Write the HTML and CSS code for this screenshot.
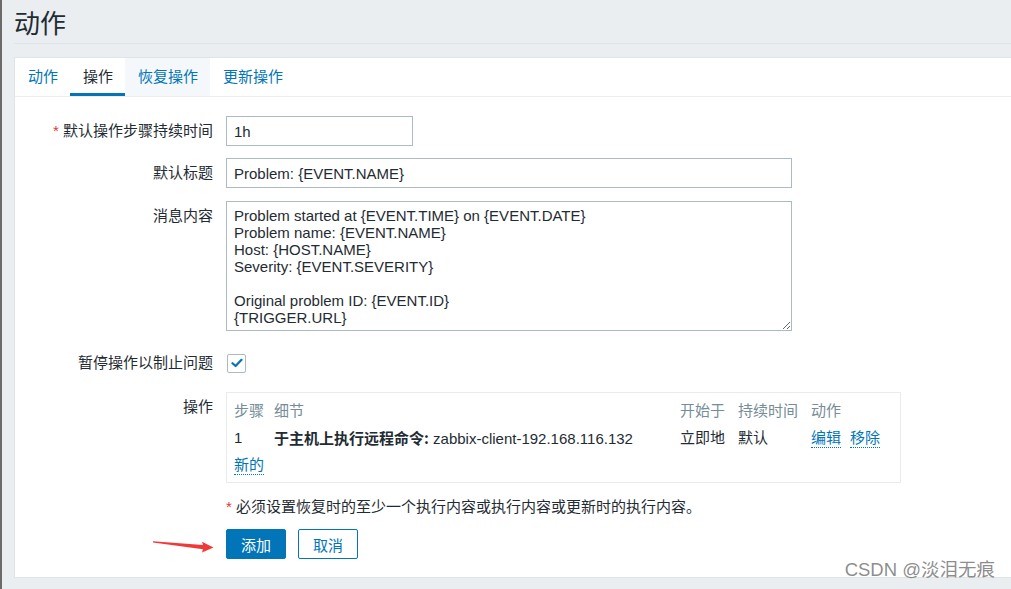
FILE: index.html
```html
<!DOCTYPE html>
<html lang="zh-CN">
<head>
<meta charset="utf-8">
<title>动作</title>
<link rel="stylesheet" href="styles.css">
</head>
<body>
<div class="page">
  <header class="page-header"><h1 class="page-title">动作</h1></header>
  <section class="panel">
    <nav class="tabs">
      <a class="tab">动作</a>
      <a class="tab tab-active">操作</a>
      <a class="tab tab-hover">恢复操作</a>
      <a class="tab">更新操作</a>
    </nav>
    <form class="form">
      <div class="row row-1">
        <label class="label"><span class="req">*</span> 默认操作步骤持续时间</label>
        <div class="field"><input class="input input-short" value="1h"></div>
      </div>
      <div class="row row-2">
        <label class="label">默认标题</label>
        <div class="field"><input class="input input-long" value="Problem: {EVENT.NAME}"></div>
      </div>
      <div class="row row-3">
        <label class="label">消息内容</label>
        <div class="field"><textarea class="textarea">Problem started at {EVENT.TIME} on {EVENT.DATE}
Problem name: {EVENT.NAME}
Host: {HOST.NAME}
Severity: {EVENT.SEVERITY}

Original problem ID: {EVENT.ID}
{TRIGGER.URL}</textarea></div>
      </div>
      <div class="row row-4">
        <label class="label">暂停操作以制止问题</label>
        <div class="field field-check">
          <span class="checkbox"><svg width="12" height="10" viewBox="0 0 12 10"><path d="M1.5 5.2 L4.6 8 L10.5 1.8" fill="none" stroke="#0275b8" stroke-width="2.2" stroke-linecap="round" stroke-linejoin="round"/></svg></span>
        </div>
      </div>
      <div class="row row-5">
        <label class="label">操作</label>
        <div class="field">
          <div class="ops">
            <div class="ops-row ops-head">
              <span>步骤</span><span>细节</span><span>开始于</span><span>持续时间</span><span>动作</span>
            </div>
            <div class="ops-row">
              <span>1</span>
              <span><b class="strong">于主机上执行远程命令:</b> zabbix-client-192.168.116.132</span>
              <span>立即地</span>
              <span>默认</span>
              <span class="ops-actions"><a class="link">编辑</a><a class="link">移除</a></span>
            </div>
            <div class="ops-row ops-new"><a class="link">新的</a></div>
          </div>
        </div>
      </div>
      <div class="row row-note">
        <div class="label"></div>
        <div class="field note"><span class="req">*</span> 必须设置恢复时的至少一个执行内容或执行内容或更新时的执行内容。</div>
      </div>
      <div class="row row-buttons">
        <div class="label"></div>
        <div class="field buttons">
          <button type="button" class="btn btn-primary">添加</button>
          <button type="button" class="btn btn-alt">取消</button>
        </div>
      </div>
    </form>
  </section>
  <svg class="arrow" width="70" height="20" viewBox="150 538 70 20"><polygon points="153,541.3 203,545 202,541.8 213.5,547.6 202,552.4 203,549.2 153,542.6" fill="#f03a3a"/></svg>
  <div class="watermark">CSDN @淡泪无痕</div>
</div>
</body>
</html>
```
FILE: styles.css
```css
html, body {
  margin: 0;
  padding: 0;
  height: 100%;
  overflow: hidden;
}
body {
  background: #ebeef0;
  font-family: "Liberation Sans", "Noto Sans CJK SC", sans-serif;
  font-size: 15px;
  color: #1f2c33;
}
.page {
  position: relative;
  height: 589px;
  border-left: 2px solid #6b6b6b;
  padding-left: 12px;
  box-sizing: border-box;
}
.page-header {
  height: 43px;
  border-bottom: 1px solid #dde3e6;
  margin-right: -20px;
}
.page-title {
  margin: 0;
  font-weight: normal;
  font-size: 26px;
  line-height: 43px;
  color: #1f2c33;
  font-family: "Noto Sans CJK SC", sans-serif;
}
.panel {
  margin-top: 13px;
  background: #fff;
  border: 1px solid #dfe4e7;
  border-right: none;
  height: 521px;
  box-sizing: border-box;
  margin-right: -20px;
}
.tabs {
  display: flex;
  height: 38px;
  border-bottom: 1px solid #ebeef0;
}
.tab {
  display: block;
  padding: 0 12px 0 13px;
  line-height: 37px;
  height: 38px;
  box-sizing: border-box;
  color: #0275b8;
  cursor: pointer;
}
.tab-active {
  color: #1f2c33;
  border-bottom: 3px solid #0275b8;
}
.tab-hover {
  background: #f4f8fb;
}
.form {
  padding-top: 19px;
}
.row {
  display: flex;
  gap: 13px;
}
.label {
  width: 198px;
  flex: none;
  text-align: right;
  line-height: 30px;
  white-space: nowrap;
}
.req {
  color: #e33734;
}
.field {
  flex: none;
}
.row-1 { margin-bottom: 12px; }
.row-2 { margin-bottom: 13px; }
.row-3 { margin-bottom: 17px; }
.row-4 { margin-bottom: 14px; }
.row-5 { margin-bottom: 14px; }
.row-note { margin-bottom: 12px; }
.input, .textarea {
  display: block;
  box-sizing: border-box;
  border: 1px solid #acbbc2;
  border-radius: 0;
  background: #fff;
  font-family: "Liberation Sans", "Noto Sans CJK SC", sans-serif;
  font-size: 15px;
  color: #1f2c33;
  margin: 0;
  outline: none;
}
.input {
  height: 30px;
  padding: 0 7px;
}
.input-short { width: 187px; }
.input-long { width: 566px; }
.textarea {
  width: 566px;
  height: 130px;
  padding: 5px 7px;
  line-height: 17px;
  resize: both;
  overflow: hidden;
}
.field-check {
  height: 30px;
  display: flex;
  align-items: center;
}
.checkbox {
  width: 19px;
  height: 19px;
  box-sizing: border-box;
  border: 1px solid #acbbc2;
  border-radius: 2px;
  display: flex;
  align-items: center;
  justify-content: center;
  margin-left: 1px;
}
.ops {
  width: 675px;
  box-sizing: border-box;
  border: 1px solid #ebebeb;
  padding: 4px 8px 4px 7px;
}
.ops-row {
  display: grid;
  grid-template-columns: 40px 406px 58px 73px 1fr;
  line-height: 27px;
  height: 27px;
  white-space: nowrap;
}
.ops-head {
  color: #768d99;
}
.strong {
  font-weight: bold;
  font-family: "Noto Sans CJK SC", sans-serif;
}
.ops-actions {
  display: flex;
  gap: 9px;
}
.link {
  color: #0275b8;
  cursor: pointer;
  display: inline-block;
  line-height: 19px;
  margin-top: 4px;
  height: 19px;
  border-bottom: 1px dotted #0275b8;
}
.ops-new {
  display: block;
}
.note {
  line-height: 20px;
}
.buttons {
  display: flex;
  gap: 12px;
}
.btn {
  height: 30px;
  box-sizing: border-box;
  border-radius: 2px;
  font-family: "Noto Sans CJK SC", sans-serif;
  font-size: 15px;
  padding: 0;
  cursor: pointer;
}
.btn-primary {
  width: 60px;
  background: #0275b8;
  border: 1px solid #0275b8;
  color: #fff;
}
.btn-alt {
  width: 60px;
  background: #fff;
  border: 1px solid #0275b8;
  color: #0275b8;
}
.arrow {
  position: absolute;
  left: 148px;
  top: 538px;
}
.watermark {
  position: absolute;
  right: 16px;
  top: 559px;
  font-size: 18.5px;
  line-height: 22px;
  color: rgba(120, 120, 120, 0.85);
  font-family: "Liberation Sans", "Noto Sans CJK SC", sans-serif;
}
```
